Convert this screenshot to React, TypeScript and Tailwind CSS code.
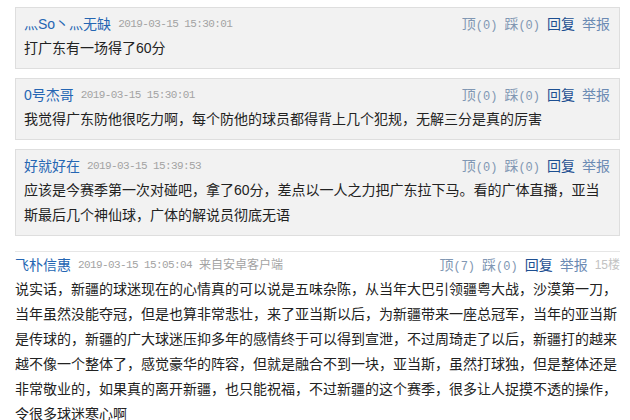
const cjk = "font-['Liberation_Sans','Noto_Sans_CJK_SC',sans-serif]";
const mono = "font-['Liberation_Mono','Noto_Sans_CJK_SC',monospace]";

type Reply = { name: string; time: string; text: string };

const replies: Reply[] = [
  { name: '灬So丶灬无缺', time: '2019-03-15 15:30:01', text: '打广东有一场得了60分' },
  {
    name: '0号杰哥',
    time: '2019-03-15 15:30:01',
    text: '我觉得广东防他很吃力啊，每个防他的球员都得背上几个犯规，无解三分是真的厉害',
  },
  {
    name: '好就好在',
    time: '2019-03-15 15:39:53',
    text: '应该是今赛季第一次对碰吧，拿了60分，差点以一人之力把广东拉下马。看的广体直播，亚当斯最后几个神仙球，广体的解说员彻底无语',
  },
];

const Actions = ({ up, down }: { up: number; down: number }) => (
  <div className="flex items-center gap-[7px] text-[14px]">
    <span className="text-[#8197b3]">
      顶<span className={`${mono} text-[12px]`}>({up})</span>
    </span>
    <span className="text-[#8197b3]">
      踩<span className={`${mono} text-[12px]`}>({down})</span>
    </span>
    <span className="text-[#1d4f91]">回复</span>
    <span className="text-[#6b8ab3]">举报</span>
  </div>
);

const ReplyBox = ({ r }: { r: Reply }) => (
  <div className="border border-[#dedede] bg-[#f2f2f2] pl-[8px] pr-[9px] pt-[4px] pb-[7px]">
    <div className="flex h-[24px] items-center justify-between">
      <div className="flex items-center gap-[7px]">
        <span className="text-[14px] text-[#2566b3]">{r.name}</span>
        <span className={`${mono} text-[11px] tracking-[-0.6px] text-[#a3a3a3]`}>{r.time}</span>
      </div>
      <Actions up={0} down={0} />
    </div>
    <div className="text-[14px] leading-[25px] text-[#222]">{r.text}</div>
  </div>
);

export default function App() {
  return (
    <div className={`${cjk} h-[420px] w-[630px] overflow-hidden bg-white pl-[15px] pr-[10px] pt-[7px]`}>
      <div className="flex flex-col gap-[9px]">
        {replies.map((r) => (
          <ReplyBox key={r.name} r={r} />
        ))}
      </div>

      {/* main comment */}
      <div className="mt-[15px] border-t border-[#e6e6e6] pt-[1px]">
        <div className="flex h-[24px] items-center justify-between">
          <div className="flex items-center gap-[7px]">
            <span className="text-[14px] text-[#2566b3]">飞朴信惠</span>
            <span className={`${mono} text-[11px] tracking-[-0.6px] text-[#a3a3a3]`}>2019-03-15 15:05:04</span>
            <span className="text-[12px] text-[#a3a3a3]">来自安卓客户端</span>
          </div>
          <div className="flex items-center gap-[7px]">
            <Actions up={7} down={0} />
            <span className="text-[12px] text-[#c2c2c2]">15楼</span>
          </div>
        </div>
        <div className="text-[14px] leading-[25px] text-[#222]">
          说实话，新疆的球迷现在的心情真的可以说是五味杂陈，从当年大巴引领疆粤大战，沙漠第一刀，当年虽然没能夺冠，但是也算非常悲壮，来了亚当斯以后，为新疆带来一座总冠军，当年的亚当斯是传球的，新疆的广大球迷压抑多年的感情终于可以得到宣泄，不过周琦走了以后，新疆打的越来越不像一个整体了，感觉豪华的阵容，但就是融合不到一块，亚当斯，虽然打球独，但是整体还是非常敬业的，如果真的离开新疆，也只能祝福，不过新疆的这个赛季，很多让人捉摸不透的操作，令很多球迷寒心啊
        </div>
      </div>
    </div>
  );
}
